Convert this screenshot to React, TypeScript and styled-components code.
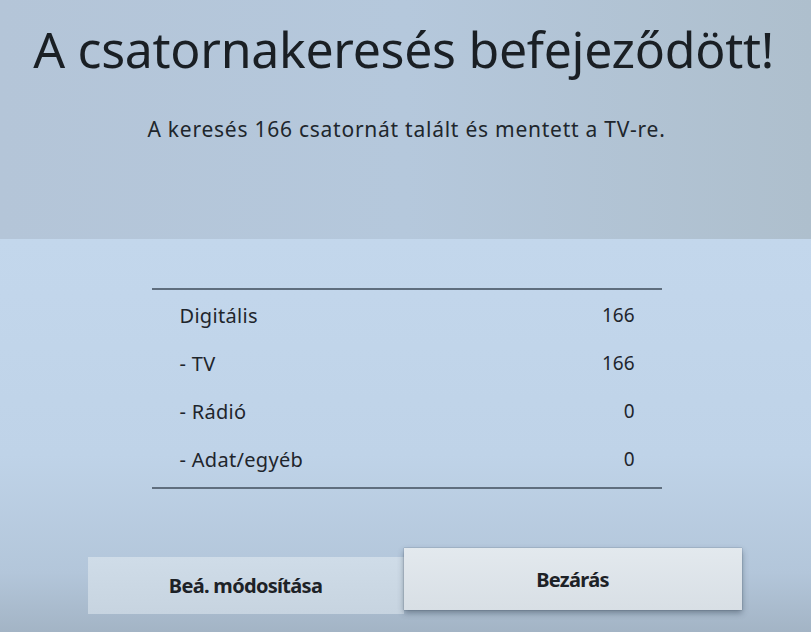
import React from 'react';
import styled, { createGlobalStyle } from 'styled-components';

const rows = [
  { id: 'dig', label: 'Digitális', value: '166' },
  { id: 'tv', label: '- TV', value: '166' },
  { id: 'radio', label: '- Rádió', value: '0' },
  { id: 'data', label: '- Adat/egyéb', value: '0' },
];

const GlobalStyle = createGlobalStyle`
  html, body {
    margin: 0;
    padding: 0;
    background: #b8cadc;
  }
  body {
    font-family: 'Noto Sans', 'Open Sans', sans-serif;
    color: #1b2127;
  }
`;

const App = () => {
  return (
    <Screen>
      <GlobalStyle />
      <Header>
        <Title>A csatornakeresés befejeződött!</Title>
        <Subtitle>A keresés 166 csatornát talált és mentett a TV-re.</Subtitle>
      </Header>
      <Body>
        <Table>
          {rows.map(({ id, label, value }) => (
            <Row key={id}>
              <Label>{label}</Label>
              <Value>{value}</Value>
            </Row>
          ))}
        </Table>
        <Buttons>
          <Button>Beá. módosítása</Button>
          <Button focused>Bezárás</Button>
        </Buttons>
      </Body>
    </Screen>
  );
};

const Screen = styled.div`
  width: 811px;
  height: 632px;
  overflow: hidden;
  display: flex;
  flex-direction: column;
`;

const Header = styled.div`
  height: 239px;
  box-sizing: border-box;
  padding-top: 15px;
  display: flex;
  flex-direction: column;
  align-items: center;
  background: linear-gradient(90deg, #b4c5d8 0%, #b5c8dc 50%, #aebfcd 100%);
`;

const Title = styled.h1`
  margin: 0;
  font-weight: 400;
  font-size: 50px;
  line-height: 68px;
  letter-spacing: -0.3px;
  color: #1a1f24;
  transform: translateX(-2px);
`;

const Subtitle = styled.p`
  margin: 32px 0 0;
  font-size: 21px;
  line-height: 28px;
  letter-spacing: 0.75px;
  color: #20262c;
  transform: translateX(1px);
`;

const Body = styled.div`
  flex: 1;
  display: flex;
  flex-direction: column;
  align-items: center;
  padding-top: 49px;
  background: linear-gradient(
    180deg,
    #c3d7ec 0%,
    #bfd3e8 55%,
    #b3c6da 85%,
    #a3b4c5 100%
  );
`;

const Table = styled.div`
  width: 510px;
  border-top: 2px solid #5f6e7e;
  border-bottom: 2px solid #5f6e7e;
  padding: 1px 0 4px;
  transform: translateX(1px);
`;

const Row = styled.div`
  height: 48px;
  display: flex;
  align-items: center;
  justify-content: space-between;
  padding: 0 27px 0 28px;
`;

const Label = styled.span`
  font-size: 20px;
  letter-spacing: 0.3px;
  color: #1e252c;
`;

const Value = styled.span`
  font-size: 19px;
  color: #1e252c;
`;

const Buttons = styled.div`
  margin-top: 59px;
  display: flex;
  align-items: flex-start;
  transform: translateX(9px);
`;

const Button = styled.div<{ focused?: boolean }>`
  box-sizing: border-box;
  width: ${({ focused }) => (focused ? '338px' : '316px')};
  height: ${({ focused }) => (focused ? '62px' : '57px')};
  margin-top: ${({ focused }) => (focused ? '0' : '9px')};
  display: flex;
  align-items: center;
  justify-content: center;
  font-weight: 700;
  font-size: 20px;
  letter-spacing: -0.7px;
  color: #1d2227;
  background: ${({ focused }) =>
    focused
      ? 'linear-gradient(180deg, #e3e9ee 0%, #d8dfe5 100%)'
      : 'linear-gradient(180deg, #cfdce8 0%, #c7d4e0 100%)'};
  box-shadow: ${({ focused }) =>
    focused ? '0 3px 6px rgba(40, 55, 70, 0.45), 0 0 1px rgba(40, 55, 70, 0.6)' : 'none'};
  z-index: ${({ focused }) => (focused ? 1 : 0)};
`;

export default App;
